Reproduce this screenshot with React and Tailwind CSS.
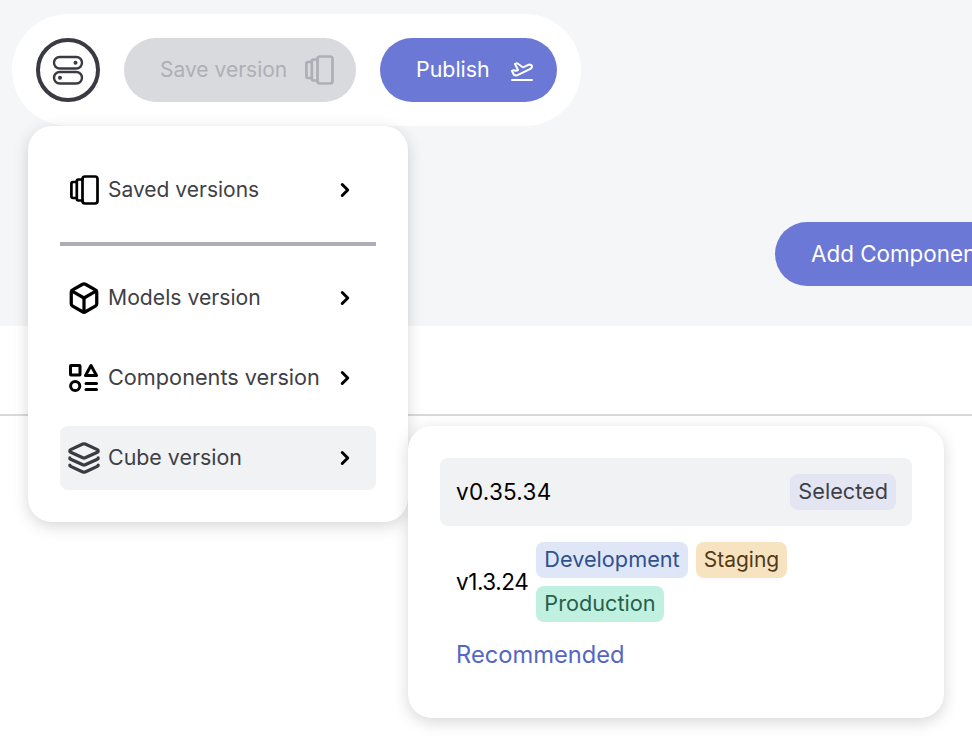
import React from 'react';
import { ChevronRight, Box, Layers, PlaneTakeoff } from 'lucide-react';

function VersionsIcon({ className }) {
  return (
    <svg className={className} viewBox="0 0 30 30" fill="none" stroke="currentColor" strokeWidth="2.7" strokeLinejoin="round" strokeLinecap="round">
      <rect x="13.5" y="1.5" width="15" height="27" rx="2.5" />
      <path d="M13.5 4.5H9.5C8.4 4.5 7.8 5.2 7.8 6.2V23.8C7.8 24.8 8.4 25.5 9.5 25.5H13.5" />
      <path d="M7.8 7H4C2.9 7 2.4 7.7 2.4 8.7V21.3C2.4 22.3 2.9 23 4 23H7.8" />
    </svg>
  );
}

function ShapesIcon({ className }) {
  return (
    <svg className={className} viewBox="0 0 30 30" fill="none" stroke="currentColor" strokeWidth="3" strokeLinejoin="round" strokeLinecap="round">
      <rect x="2.5" y="2.5" width="9.5" height="9.5" rx="0.5" />
      <path d="M23 2.5L28.5 12.5H17.5Z" />
      <circle cx="7.2" cy="23" r="4.6" />
      <path d="M18 20.5H28.5M18 26.5H28.5" />
    </svg>
  );
}

function StackIcon() {
  return (
    <span className="flex h-[64px] w-[64px] items-center justify-center rounded-full border-[4px] border-[#3a3b42]">
      <svg className="h-[34px] w-[34px] text-[#3a3b42]" viewBox="0 0 34 34" fill="none" stroke="currentColor" strokeWidth="2.4">
        <rect x="3" y="4" width="28" height="11.5" rx="5.7" />
        <rect x="3" y="19" width="28" height="11.5" rx="5.7" />
        <circle cx="24.5" cy="9.8" r="2" fill="currentColor" stroke="none" />
        <circle cx="9" cy="24.7" r="2" fill="currentColor" stroke="none" />
      </svg>
    </span>
  );
}

function MenuRow({ icon, label, active, textClass }) {
  return (
    <div className={`flex h-16 items-center rounded-lg pl-2 pr-[20px] ${active ? 'bg-[#f1f2f4]' : ''}`}>
      <span className="flex w-10 shrink-0 items-center">{icon}</span>
      <span className={`flex-1 pb-px text-[#3f4046] ${textClass}`}>{label}</span>
      <ChevronRight className="h-[22px] w-[22px] text-black" strokeWidth={3.2} />
    </div>
  );
}

function Tag({ className, children }) {
  return (
    <span className={`flex h-9 items-center rounded-lg px-2 pb-px ${className}`}>
      {children}
    </span>
  );
}

export default function App() {
  return (
    <div className="relative h-[752px] w-[972px] overflow-hidden bg-white font-['Inter',sans-serif]">
      <div className="flex h-[326px] flex-col items-start bg-[#f5f6f7] pl-3 pt-3.5">
        <div className="flex h-28 w-[569px] items-center rounded-[56px] bg-white pl-6">
          <StackIcon />
          <button className="ml-6 flex h-16 w-[232px] items-center rounded-full bg-[#d9dade] pl-9 text-[21px] text-[#aeafb6]">
            <span className="pb-px">Save version</span>
            <VersionsIcon className="ml-[17px] h-[30px] w-[30px]" />
          </button>
          <button className="ml-6 flex h-16 w-[177px] items-center rounded-full bg-[#6b78d6] pl-9 text-[21.4px] text-white">
            <span className="pb-px">Publish</span>
            <PlaneTakeoff className="ml-5 h-6 w-6" strokeWidth={2} />
          </button>
        </div>
        <button className="ml-[763px] mt-24 flex h-16 w-[260px] shrink-0 items-center rounded-full bg-[#6b78d6] pb-px pl-9 text-[22.4px] whitespace-nowrap text-white">
          Add Component
        </button>
      </div>
      <div className="h-[90px] border-b-2 border-[#d9d9d9]" />

      <div className="absolute left-7 top-[126px] w-[380px] rounded-3xl bg-white px-8 pb-8 pt-8 shadow-[0_4px_16px_rgba(0,0,0,0.16)]">
        <MenuRow icon={<VersionsIcon className="ml-px h-[30px] w-[30px] text-black" />} label="Saved versions" textClass="text-[21px]" />
        <div className="mt-5 mb-5 h-1 bg-[#aeafb6]" />
        <MenuRow icon={<Box className="-ml-px h-[34px] w-[34px] text-black" strokeWidth={2.3} />} label="Models version" textClass="text-[21.2px]" />
        <div className="mt-4">
          <MenuRow icon={<ShapesIcon className="h-[30px] w-[30px] text-black" />} label="Components version" textClass="text-[21.7px]" />
        </div>
        <div className="mt-4">
          <MenuRow active icon={<Layers className="-ml-px h-[34px] w-[34px] text-[#3a3b42]" strokeWidth={2.3} />} label="Cube version" textClass="text-[21.4px]" />
        </div>
      </div>

      <div className="absolute left-[408px] top-[426px] h-[292px] w-[536px] rounded-3xl bg-white p-8 shadow-[0_4px_16px_rgba(0,0,0,0.16)]">
        <div className="flex h-[68px] items-center justify-between rounded-lg bg-[#f1f2f4] pl-4 pr-4">
          <span className="text-[22.5px] tracking-[0.25px] text-black">v0.35.34</span>
          <Tag className="bg-[#e4e5f3] text-[21.7px] text-[#3f4046]">Selected</Tag>
        </div>
        <div className="mt-4 flex items-center pl-4">
          <span className="text-[22.5px] tracking-[-0.45px] text-black">v1.3.24</span>
          <div className="ml-2 flex flex-wrap gap-2">
            <Tag className="bg-[#dee6f8] text-[21.7px] text-[#2f5190]">Development</Tag>
            <Tag className="bg-[#f8e3c0] text-[21px] text-[#4f3a1a]">Staging</Tag>
            <Tag className="bg-[#c0f0e0] text-[21.7px] text-[#27604c]">Production</Tag>
          </div>
        </div>
        <div className="mt-[18px] pl-4 text-[23.7px] leading-[30px] text-[#5566c4]">Recommended</div>
      </div>
    </div>
  );
}
